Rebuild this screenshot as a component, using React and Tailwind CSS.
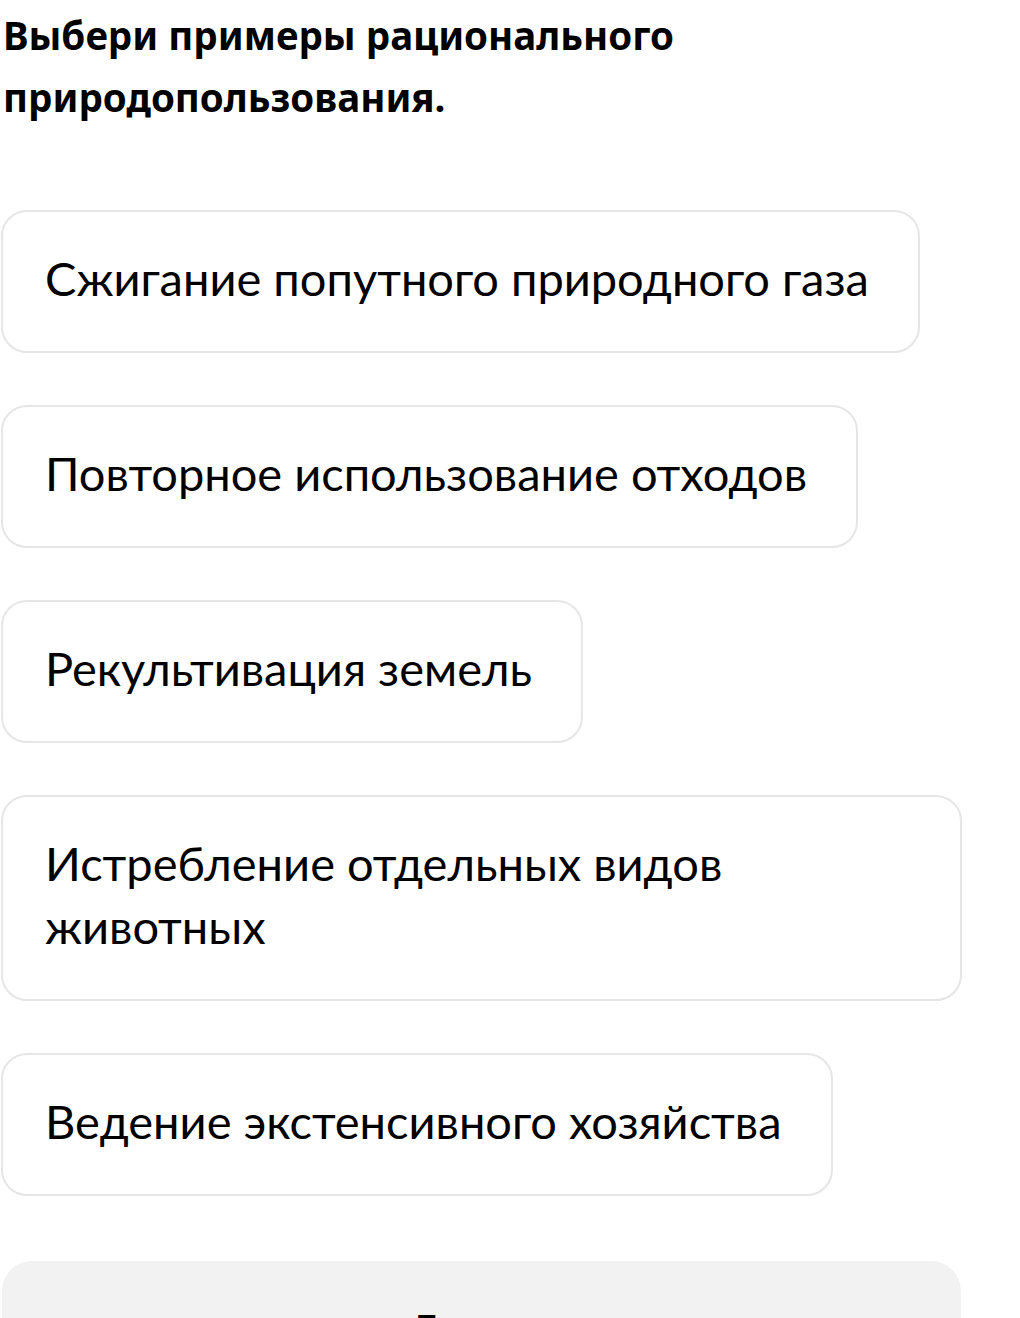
import React from "react";

const options = [
  "Сжигание попутного природного газа",
  "Повторное использование отходов",
  "Рекультивация земель",
  "Истребление отдельных видов животных",
  "Ведение экстенсивного хозяйства",
];

const Option = ({ label }) => (
  <button className="w-fit max-w-full text-left rounded-[26px] border-2 border-[#e6e6e6] bg-white pl-[42px] pr-[49px] pt-[35px] pb-[41px] text-[47px] leading-[63px] text-black font-['Lato',sans-serif]">
    {label}
  </button>
);

export default function App() {
  return (
    <div className="w-[962px] bg-white min-h-screen">
      <h1 className="pt-[4px] pl-[3px] text-[38.5px] leading-[62px] font-bold text-black font-['Noto_Sans',sans-serif]">
        Выбери примеры рационального природопользования.
      </h1>

      <div className="mt-[82px] flex flex-col items-start gap-[52px] pl-px">
        {options.map((o) => (
          <Option key={o} label={o} />
        ))}
      </div>

      <button className="mt-[65px] ml-[2px] w-[959px] rounded-[30px] bg-[#f2f2f2] pt-[37px] pb-[32px] text-[38.5px] leading-[61px] font-bold text-black font-['Noto_Sans',sans-serif]">
        Готово
      </button>
    </div>
  );
}
